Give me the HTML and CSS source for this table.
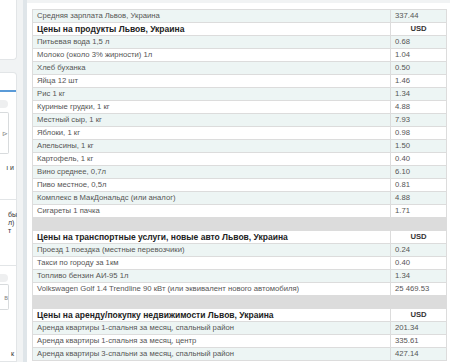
FILE: index.html
```html
<!DOCTYPE html>
<html lang="ru">
<head>
<meta charset="utf-8">
<link rel="stylesheet" href="styles.css">
</head>
<body>
<div class="page">
  <aside class="sidebar">
    <div class="panel panel-top"></div>
    <div class="panel panel-main">
      <div class="tab-head"></div>
      <div class="pill"></div>
      <div class="box box-a"><span class="glyph">&#8883;</span></div>
      <div class="frag frag-a">ı и</div>
      <div class="divider"></div>
      <div class="frag frag-b">бы<br>л)<br>т</div>
      <div class="divider divider-b"></div>
      <div class="pill pill-b"></div>
      <div class="box box-b"><span class="glyph">в</span></div>
      <div class="frag frag-c">к</div>
    </div>
  </aside>
  <div class="strip"></div>
  <main class="content">
    <table class="prices">
      <colgroup><col class="c-name"><col class="c-val"></colgroup>
      <tr class="alt"><td>Средняя зарплата Львов, Украина</td><td>337.44</td></tr>
      <tr class="head"><td>Цены на продукты Львов, Украина</td><td class="usd">USD</td></tr>
      <tr class="alt"><td>Питьевая вода 1,5 л</td><td>0.68</td></tr>
      <tr><td>Молоко (около 3% жирности) 1л</td><td>1.04</td></tr>
      <tr class="alt"><td>Хлеб буханка</td><td>0.50</td></tr>
      <tr><td>Яйца 12 шт</td><td>1.46</td></tr>
      <tr class="alt"><td>Рис 1 кг</td><td>1.34</td></tr>
      <tr><td>Куриные грудки, 1 кг</td><td>4.88</td></tr>
      <tr class="alt"><td>Местный сыр, 1 кг</td><td>7.93</td></tr>
      <tr><td>Яблоки, 1 кг</td><td>0.98</td></tr>
      <tr class="alt"><td>Апельсины, 1 кг</td><td>1.50</td></tr>
      <tr><td>Картофель, 1 кг</td><td>0.40</td></tr>
      <tr class="alt"><td>Вино среднее, 0,7л</td><td>6.10</td></tr>
      <tr><td>Пиво местное, 0,5л</td><td>0.81</td></tr>
      <tr class="alt"><td>Комплекс в МакДональдс (или аналог)</td><td>4.88</td></tr>
      <tr><td>Сигареты 1 пачка</td><td>1.71</td></tr>
      <tr class="sep"><td></td><td></td></tr>
      <tr class="head"><td>Цены на транспортные услуги, новые авто Львов, Украина</td><td class="usd">USD</td></tr>
      <tr class="alt"><td>Проезд 1 поездка (местные перевозчики)</td><td>0.24</td></tr>
      <tr><td>Такси по городу за 1км</td><td>0.40</td></tr>
      <tr class="alt"><td>Топливо бензин АИ-95 1л</td><td>1.34</td></tr>
      <tr><td>Volkswagen Golf 1.4 Trendline 90 кВт (или эквивалент нового автомобиля)</td><td>25 469.53</td></tr>
      <tr class="sep"><td></td><td></td></tr>
      <tr class="head"><td>Цены на аренду/покупку недвижимости Львов, Украина</td><td class="usd">USD</td></tr>
      <tr class="alt"><td>Аренда квартиры 1-спальня за месяц, спальный район</td><td>201.34</td></tr>
      <tr><td>Аренда квартиры 1-спальня за месяц, центр</td><td>335.61</td></tr>
      <tr class="alt"><td>Аренда квартиры 3-спальни за месяц, спальный район</td><td>427.14</td></tr>
    </table>
  </main>
</div>
</body>
</html>
```
FILE: styles.css
```css
html, body {
  margin: 0;
  padding: 0;
  height: 100%;
  overflow: hidden;
}
body {
  background: #f1f3f4;
  font-family: "Liberation Sans", Arial, sans-serif;
}
.page {
  display: flex;
  height: 362px;
}
.sidebar {
  width: 17px;
  flex: 0 0 17px;
  display: flex;
  flex-direction: column;
  gap: 12px;
  overflow: hidden;
}
.panel {
  background: #fff;
  border-right: 1px solid #e2e5e7;
  border-bottom: 1px solid #e2e5e7;
  border-radius: 0 0 4px 0;
}
.panel-top {
  height: 59px;
}
.panel-main {
  flex: 1;
  border-top: 1px solid #e2e5e7;
  border-radius: 0 4px 0 0;
  display: flex;
  flex-direction: column;
  font-size: 7px;
  color: #333;
}
.tab-head {
  height: 17px;
  border-bottom: 2px solid #5b9bd8;
}
.pill {
  margin-top: 8px;
  width: 8px;
  height: 8px;
  background: #eeeff0;
  border-radius: 0 4px 4px 0;
}
.box {
  margin-top: 4px;
  width: 8px;
  height: 40px;
  border: 1px solid #d8dbdd;
  border-left: none;
  border-radius: 0 2px 2px 0;
  display: flex;
  align-items: center;
  justify-content: flex-end;
  overflow: hidden;
}
.glyph {
  font-size: 7px;
  color: #888;
  line-height: 7px;
}
.frag {
  text-align: right;
  padding-right: 2px;
  line-height: 8px;
  white-space: nowrap;
}
.frag-a {
  margin-top: 10px;
}
.divider {
  margin-top: 27px;
  height: 1px;
  background: #e2e5e7;
}
.frag-b {
  margin-top: 11px;
  text-align: left;
  padding-left: 8px;
}
.divider-b {
  margin-top: 30px;
}
.pill-b {
  margin-top: 8px;
}
.box-b {
  height: 24px;
  margin-top: 2px;
}
.frag-c {
  margin-top: 40px;
}
.strip {
  width: 4px;
  flex: 0 0 4px;
  margin-left: 6px;
  background: #dfe5e9;
}
.content {
  flex: 1;
  background: #fff;
  margin-top: 3px;
  padding: 6px 3px 0 5px;
  overflow: hidden;
}
.prices {
  width: 415px;
  border-collapse: collapse;
  table-layout: fixed;
  border: 1px solid #dcdcdc;
}
.c-val {
  width: 56px;
}
.prices td {
  height: 12px;
  padding: 0 4px;
  font-size: 7.7px;
  line-height: 12px;
  color: #555;
  border: 1px solid #dcdcdc;
  border-left: none;
  white-space: nowrap;
  overflow: hidden;
}
.prices td + td {
  border-left: 1px solid #dcdcdc;
}
.prices tr {
  background: #fff;
}
.prices tr.alt {
  background: #edf5f4;
}
.prices tr.head td {
  font-size: 8.5px;
  font-weight: bold;
  color: #222;
}
.prices tr.head td.usd {
  font-size: 7.7px;
  text-align: center;
  color: #333;
}
.prices tr.sep {
  background: #dcdcdc;
}
```
